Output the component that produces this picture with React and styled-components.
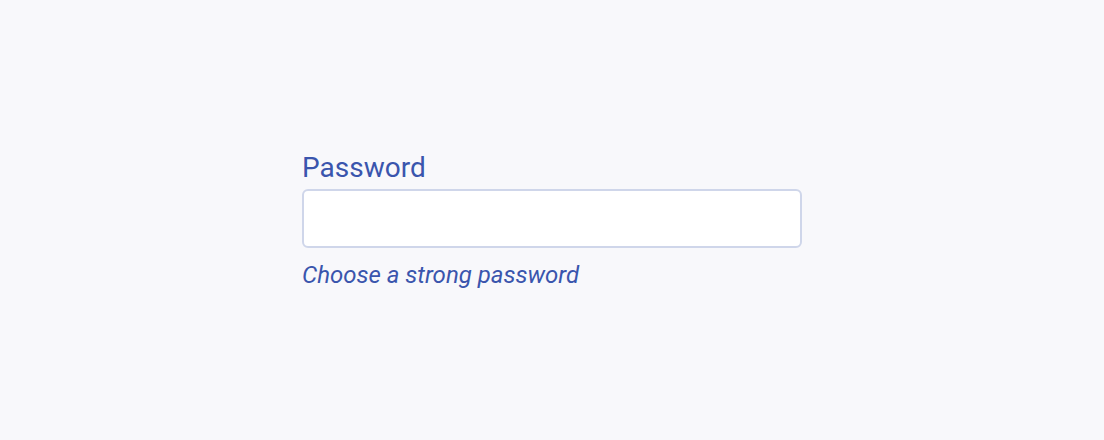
import React from 'react';
import styled, { createGlobalStyle } from 'styled-components';

const GlobalStyle = createGlobalStyle`
  html, body {
    margin: 0;
    padding: 0;
    background: #f8f8fb;
  }
  * {
    box-sizing: border-box;
  }
`;

const Page = styled.div`
  display: flex;
  align-items: center;
  justify-content: center;
  height: 100vh;
  background: #f8f8fb;
  font-family: Roboto, 'Liberation Sans', sans-serif;
`;

const Field = styled.div`
  display: flex;
  flex-direction: column;
  width: 500px;
`;

const Label = styled.label`
  color: #3a55ad;
  font-size: 28px;
  line-height: 33px;
  margin-bottom: 5px;
`;

const Input = styled.input`
  height: 59px;
  width: 100%;
  background: #fff;
  border: 2px solid #cfd6ea;
  border-radius: 6px;
  padding: 0 14px;
  font-family: inherit;
  font-size: 20px;
  outline: none;
`;

const Hint = styled.div`
  color: #3a55ad;
  font-size: 24px;
  font-style: italic;
  line-height: 28px;
  margin-top: 13px;
`;

function App() {
  return (
    <Page>
      <GlobalStyle />
      <Field>
        <Label htmlFor="password">Password</Label>
        <Input id="password" type="password" />
        <Hint>Choose a strong password</Hint>
      </Field>
    </Page>
  );
}

export default App;
